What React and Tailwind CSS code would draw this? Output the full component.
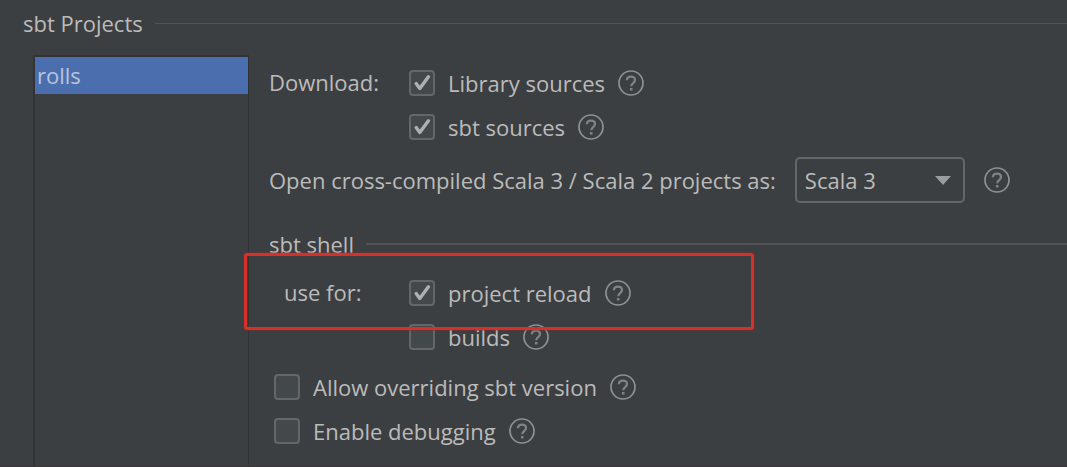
import { useState } from "react";

function HelpButton({ topic }) {
  return (
    <button type="button" aria-label={"Help: " + topic} className="size-[26px] shrink-0 text-[#8a9298]">
      <svg viewBox="0 0 26 26" className="size-[26px]" fill="none" stroke="currentColor">
        <circle cx="13" cy="13" r="12" strokeWidth="1.7" />
        <path d="M8.9 10.2C9 7.9 10.7 6.7 13 6.7s4 1.3 4 3.4c0 2.9-3.8 3-3.8 6.2" stroke="#7f8385" strokeWidth="2.3" />
        <path d="M11.9 18h2.6v2.5h-2.6z" fill="#7f8385" stroke="none" />
      </svg>
    </button>
  );
}

function CheckRow({ text, initial = false }) {
  const [checked, setChecked] = useState(initial);
  return (
    <div className="flex h-11 items-center gap-[13px]">
      <label className="flex items-center gap-[13px]">
        <span className="grid size-[26px] shrink-0">
          <input
            type="checkbox"
            checked={checked}
            onChange={(e) => setChecked(e.target.checked)}
            className="col-start-1 row-start-1 size-[26px] appearance-none rounded-[4px] border-2 border-[#646667] bg-[#43494a]"
          />
          {checked && (
            <svg viewBox="0 0 26 26" className="pointer-events-none col-start-1 row-start-1 size-[26px]" fill="none" stroke="#adafb0" strokeWidth="3.4" strokeLinecap="round" strokeLinejoin="round">
              <path d="M7.2 13.6L10.8 18.4L19.4 6.8" />
            </svg>
          )}
        </span>
        <span>{text}</span>
      </label>
      <HelpButton topic={text} />
    </div>
  );
}

export default function App() {
  return (
    <main className="flex min-h-screen flex-col border-b border-[#38373a] bg-[#3c3f41] font-['Open_Sans','Noto_Sans',sans-serif] text-[22px] leading-[30px] text-[#bbbbbb]">
      <header className="flex items-center gap-3 pt-2 pl-[23px]">
        <h1>sbt Projects</h1>
        <div className="h-px grow bg-[#515355]" />
      </header>

      <div className="flex grow gap-5 pt-[17px] pl-[33px]">
        <ul className="w-[216px] shrink-0 border-t-2 border-r border-l-2 border-[#313335]">
          <li>
            <button type="button" className="block h-[37px] w-full bg-[#4b6eaf] pb-0.5 pl-0.5 text-left text-[#b9c4da]">
              rolls
            </button>
          </li>
        </ul>

        <div className="min-w-0 grow pt-1.5">
          <div className="flex">
            <div className="w-[140px] shrink-0 pt-1.5">Download:</div>
            <div>
              <CheckRow text="Library sources" initial />
              <CheckRow text="sbt sources" initial />
            </div>
          </div>

          <div className="flex items-center gap-[19px] pt-2">
            <label htmlFor="scala-version">Open cross-compiled Scala 3 / Scala 2 projects as:</label>
            <div className="grid w-[170px] shrink-0 items-center">
              <select id="scala-version" defaultValue="Scala 3" className="col-start-1 row-start-1 h-[46px] w-full appearance-none rounded-[5px] border-2 border-[#646667] bg-[#3c3f41] pl-2">
                <option>Scala 3</option>
                <option>Scala 2</option>
              </select>
              <svg viewBox="0 0 16 9" className="pointer-events-none col-start-1 row-start-1 mr-3.5 h-[9px] w-4 justify-self-end" fill="#9a9da0">
                <path d="M0 0h16L8 9z" />
              </svg>
            </div>
            <HelpButton topic="cross-compiled projects" />
          </div>

          <div className="flex items-center gap-3 pt-[26px]">
            <h2>sbt shell</h2>
            <div className="h-0.5 grow bg-[#515355]" />
          </div>

          <div className="relative flex pt-3">
            <div className="w-[140px] shrink-0 pt-1.5 pl-[15px]">use for:</div>
            <div>
              <CheckRow text="project reload" initial />
              <CheckRow text="builds" />
            </div>
            <div className="pointer-events-none absolute -top-1.5 -left-[25px] h-[77px] w-[510px] rounded-[3px] border-3 border-[#d5302a] shadow-[0_0_1px_1px_#8a2a2866]" />
          </div>

          <div className="pt-1.5 pl-[5px]">
            <CheckRow text="Allow overriding sbt version" />
            <CheckRow text="Enable debugging" />
          </div>
        </div>
      </div>
    </main>
  );
}
